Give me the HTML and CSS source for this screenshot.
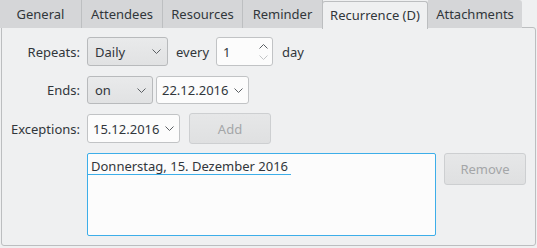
FILE: index.html
```html
<!DOCTYPE html>
<html>
<head>
<meta charset="utf-8">
<link rel="stylesheet" href="styles.css">
</head>
<body>
<div class="tabs">
  <div class="tab t1">General</div>
  <div class="tab t2">Attendees</div>
  <div class="tab t3">Resources</div>
  <div class="tab t4">Reminder</div>
  <div class="tab active">Recurrence (D)</div>
  <div class="tab last">Attachments</div>
</div>
<div class="panel">
  <div class="form">
    <div class="label">Repeats:</div>
    <div class="field">
      <div class="combo w-daily"><span>Daily</span><svg class="chev" width="9" height="5" viewBox="0 0 9 5"><polyline points="0.5,0.5 4.5,4.5 8.5,0.5" fill="none" stroke="#5b5f63" stroke-width="1"/></svg></div>
      <span class="word every">every</span>
      <div class="spin"><span>1</span>
        <div class="arrows">
          <svg width="9" height="5" viewBox="0 0 9 5"><polyline points="0.5,4.5 4.5,0.5 8.5,4.5" fill="none" stroke="#5b5f63" stroke-width="1"/></svg>
          <svg width="9" height="5" viewBox="0 0 9 5"><polyline points="0.5,0.5 4.5,4.5 8.5,0.5" fill="none" stroke="#c2c4c6" stroke-width="1"/></svg>
        </div>
      </div>
      <span class="word day">day</span>
    </div>

    <div class="label">Ends:</div>
    <div class="field">
      <div class="combo w-on"><span>on</span><svg class="chev" width="9" height="5" viewBox="0 0 9 5"><polyline points="0.5,0.5 4.5,4.5 8.5,0.5" fill="none" stroke="#5b5f63" stroke-width="1"/></svg></div>
      <div class="edit w-date1"><span>22.12.2016</span><svg class="chev" width="9" height="5" viewBox="0 0 9 5"><polyline points="0.5,0.5 4.5,4.5 8.5,0.5" fill="none" stroke="#5b5f63" stroke-width="1"/></svg></div>
    </div>

    <div class="label">Exceptions:</div>
    <div class="field">
      <div class="edit w-date2"><span>15.12.2016</span><svg class="chev" width="9" height="5" viewBox="0 0 9 5"><polyline points="0.5,0.5 4.5,4.5 8.5,0.5" fill="none" stroke="#5b5f63" stroke-width="1"/></svg></div>
      <div class="btn add">Add</div>
    </div>

    <div class="label"></div>
    <div class="field top">
      <div class="list">
        <div class="item">Donnerstag, 15. Dezember 2016&nbsp;</div>
      </div>
      <div class="btn remove">Remove</div>
    </div>
  </div>
</div>
</body>
</html>
```
FILE: styles.css
```css
* { box-sizing: border-box; }
html, body { margin: 0; padding: 0; }
body {
  width: 537px;
  height: 248px;
  background: #eff0f1;
  font-family: "Noto Sans", "Open Sans", sans-serif;
  font-size: 13px;
  color: #31363b;
  overflow: hidden;
}
.tabs {
  display: flex;
  height: 28px;
  position: relative;
  z-index: 2;
}
.tab {
  flex: none;
  height: 28px;
  line-height: 28px;
  text-align: center;
  background: #d5d6d8;
  border-right: 1px solid #bdbfc1;
  white-space: nowrap;
}
.t1 { width: 82px; }
.t2 { width: 81px; }
.t3 { width: 80px; }
.t4 { width: 80px; }
.tab.active {
  width: 106px;
  margin-top: 1px;
  margin-left: -1px;
  height: 28px;
  line-height: 26px;
  background: #eff0f1;
  border: 1px solid #bcbec0;
  border-bottom: none;
  border-radius: 3px 3px 0 0;
}
.tab.last {
  width: 94px;
  border-right: none;
  border-radius: 0 3px 0 0;
}
.panel {
  margin: -1px 1px 0 1px;
  height: 219px;
  border: 1px solid #bcbec0;
  border-radius: 0 3px 3px 3px;
  background: #eff0f1;
  padding: 9px 9px 8px 9px;
}
.form {
  display: grid;
  grid-template-columns: 69px 1fr;
  grid-template-rows: 29px 38px 40px 92px;
  column-gap: 7px;
}
.form > :nth-child(3), .form > :nth-child(4) { margin-top: 10px; }
.form > :nth-child(5), .form > :nth-child(6) { margin-top: 9px; }
.form > :nth-child(7), .form > :nth-child(8) { margin-top: 9px; }
.label {
  display: flex;
  align-items: center;
  justify-content: flex-end;
  white-space: nowrap;
}
.field {
  display: flex;
  align-items: center;
}
.field.top { align-items: flex-start; }
.combo, .edit, .spin {
  display: flex;
  align-items: center;
  height: 100%;
  border-radius: 3px;
  white-space: nowrap;
}
.combo {
  border: 1px solid #b8babc;
  background: linear-gradient(#e9eaeb, #e1e2e3);
  padding: 0 6px 0 7px;
  justify-content: space-between;
}
.edit {
  border: 1px solid #c1c3c5;
  background: #fcfcfc;
  padding: 0 5px;
  justify-content: space-between;
}
.w-daily { width: 81px; }
.w-on { width: 66px; }
.w-date1 { width: 93px; margin-left: 3px; }
.w-date2 { width: 93px; height: 29px; }
.chev { display: block; }
.every { margin-left: 8px; margin-right: 7px; }
.day { margin-left: 9px; }
.spin {
  width: 57px;
  border: 1px solid #c1c3c5;
  background: #fcfcfc;
  padding: 0 4px 0 6px;
  justify-content: space-between;
}
.arrows {
  display: flex;
  flex-direction: column;
  gap: 6px;
}
.arrows svg { display: block; }
.btn {
  width: 82px;
  height: 31px;
  display: flex;
  align-items: center;
  justify-content: center;
  border: 1px solid #cdcfd1;
  border-radius: 3px;
  background: linear-gradient(#e6e7e8, #dfe0e1);
  color: #a4a6a8;
}
.add { margin-left: 9px; }
.remove { margin-left: 8px; height: 32px; }
.list {
  flex: 1;
  height: 83px;
  border: 1px solid #3daee9;
  border-radius: 2px;
  background: #fcfcfc;
}
.item {
  display: inline-block;
  padding: 4px 0 0 3px;
  height: 21px;
  line-height: 16px;
  border-bottom: 1px solid #3daee9;
  white-space: pre;
}
```
